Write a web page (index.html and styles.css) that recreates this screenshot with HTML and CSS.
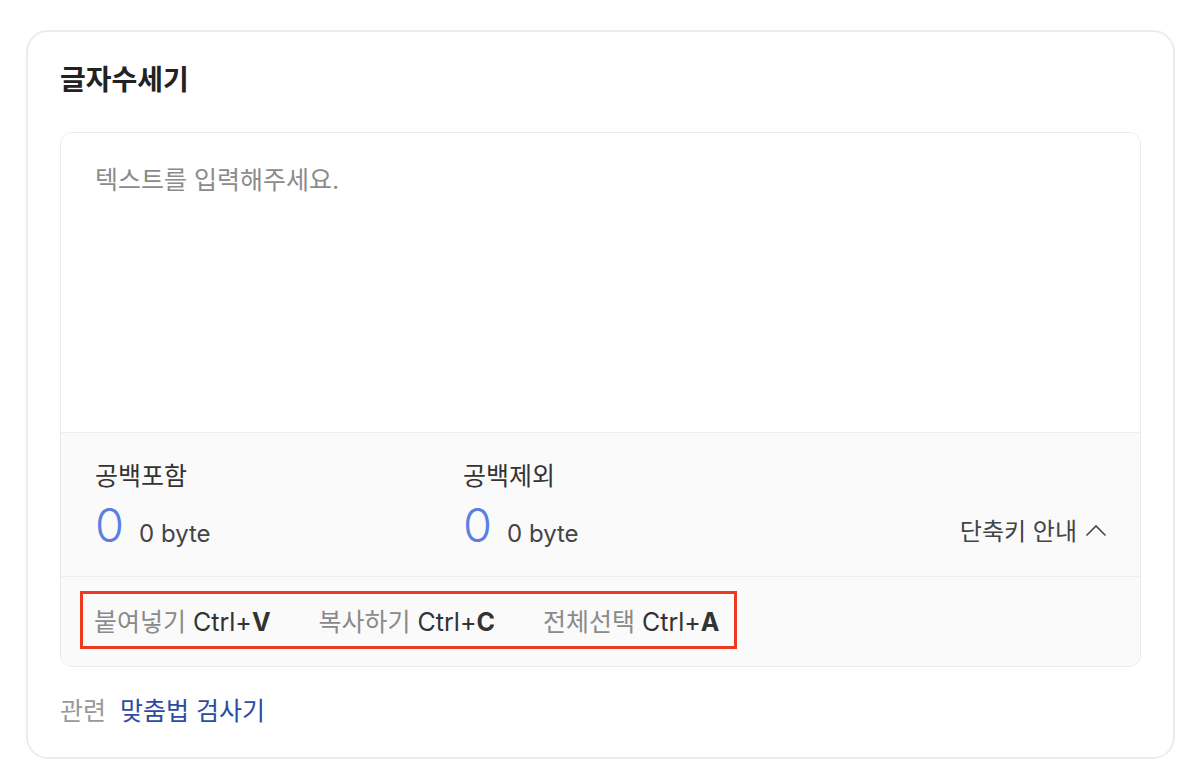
FILE: index.html
```html
<!DOCTYPE html>
<html lang="ko">
<head>
<meta charset="utf-8">
<title>글자수세기</title>
<link rel="stylesheet" href="styles.css">
</head>
<body>
<div class="page">
  <section class="card">
    <h1 class="title">글자수세기</h1>
    <div class="counter">
      <div class="input-area">
        <div class="placeholder">텍스트를 입력해주세요.</div>
      </div>
      <div class="stats">
        <div class="stat">
          <div class="stat-label">공백포함</div>
          <div class="stat-value"><span class="num">0</span><span class="bytes">0 byte</span></div>
        </div>
        <div class="stat">
          <div class="stat-label">공백제외</div>
          <div class="stat-value"><span class="num">0</span><span class="bytes">0 byte</span></div>
        </div>
        <div class="guide-toggle">단축키 안내
          <svg class="chev" width="22" height="13" viewBox="0 0 22 13"><polyline points="1.5,11.5 11,2 20.5,11.5" fill="none" stroke="#4a4a4a" stroke-width="1.6"/></svg>
        </div>
      </div>
      <div class="shortcuts">
        <div class="shortcut-list">
          <span class="sc"><span class="sc-name">붙여넣기</span> <span class="sc-key">Ctrl+<b>V</b></span></span>
          <span class="sc"><span class="sc-name">복사하기</span> <span class="sc-key">Ctrl+<b>C</b></span></span>
          <span class="sc"><span class="sc-name">전체선택</span> <span class="sc-key">Ctrl+<b>A</b></span></span>
        </div>
      </div>
    </div>
    <div class="related"><span class="related-label">관련</span><a class="related-link" href="#">맞춤법 검사기</a></div>
  </section>
</div>
</body>
</html>
```

FILE: styles.css
```css
* { box-sizing: border-box; }
html, body { margin: 0; padding: 0; background: #fff; }
body {
  font-family: "Inter", "Noto Sans CJK KR", sans-serif;
  color: #333;
}
.page {
  padding: 30px 25px 0 26px;
}
.card {
  width: 1149px;
  height: 729px;
  border: 2px solid #ececec;
  border-radius: 22px;
  padding: 30px 32px 0 32px;
}
.title {
  margin: 0;
  font-size: 28px;
  line-height: 36px;
  font-weight: 700;
  color: #222;
}
.counter {
  margin-top: 34px;
  border: 1px solid #eaeaea;
  border-radius: 12px;
  overflow: hidden;
}
.input-area {
  height: 299px;
  background: #fff;
  padding: 30px 34px;
}
.placeholder {
  font-size: 25px;
  line-height: 34px;
  color: #8b8b8b;
}
.stats {
  border-top: 1px solid #eeeeee;
  background: #fafafa;
  height: 144px;
  padding: 26px 33px 0 34px;
  display: flex;
  align-items: flex-start;
}
.stat {
  width: 368px;
}
.stat-label {
  font-size: 25px;
  line-height: 34px;
  color: #333;
}
.stat-value {
  margin-top: 9px;
  display: flex;
  align-items: baseline;
}
.num {
  font-size: 47px;
  line-height: 46px;
  font-weight: 300;
  color: #5b80df;
}
.bytes {
  margin-left: 15px;
  font-size: 24px;
  color: #444;
}
.guide-toggle {
  margin-left: auto;
  margin-top: 57px;
  font-size: 24px;
  line-height: 32px;
  color: #444;
  display: flex;
  align-items: center;
  gap: 8px;
}
.chev { margin-top: -4px; }
.shortcuts {
  border-top: 1px solid #eeeeee;
  background: #fafafa;
  height: 90px;
  padding: 14px 0 0 19px;
}
.shortcut-list {
  display: inline-flex;
  gap: 48px;
  border: 3px solid #ee3a1f;
  height: 58px;
  align-items: center;
  padding: 0 14px 0 11px;
}
.sc {
  font-size: 25px;
  white-space: nowrap;
}
.sc-name { color: #8a8a8a; }
.sc-key { color: #333; }
.sc-key b { font-weight: 700; }
.related {
  margin-top: 27px;
  font-size: 25px;
  line-height: 34px;
}
.related-label {
  color: #999;
  margin-right: 14px;
}
.related-link {
  color: #2d4c9f;
  text-decoration: none;
}
```
